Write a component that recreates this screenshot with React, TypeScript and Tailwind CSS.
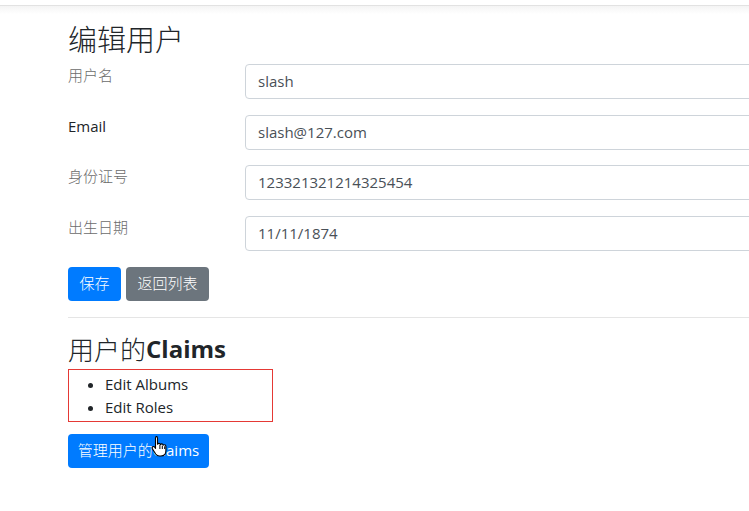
import React from "react";

const latin = "font-['Open_Sans','Noto_Sans_CJK_SC',sans-serif]";

function Field({ label, value, cjk }: { label: string; value: string; cjk?: boolean }) {
  return (
    <div className="flex items-start h-[35px]">
      <div
        className={`w-[177px] shrink-0 text-[15px] leading-[22px] ${
          cjk ? "text-[#6b6b6b] font-light font-['Noto_Sans_CJK_SC',sans-serif]" : "text-[#212529]"
        }`}
      >
        {label}
      </div>
      <div className="w-[600px] shrink-0 h-[35px] border border-[#ced4da] rounded-[4px] pl-[12px] flex items-center text-[15px] text-[#495057]">
        {value}
      </div>
    </div>
  );
}

function HandCursor() {
  return (
    <svg
      className="absolute left-[151px] top-[435px]"
      width="17"
      height="22"
      viewBox="0 0 17 22"
      fill="none"
    >
      <path
        d="M5 1.5c.9 0 1.5.6 1.5 1.5v6.2c.3-.5.8-.8 1.4-.8.8 0 1.4.5 1.5 1.2.3-.4.8-.7 1.3-.7.8 0 1.4.5 1.5 1.3.3-.3.7-.5 1.2-.5.9 0 1.5.7 1.5 1.6v4.5c0 3-2 5.2-5 5.2H8.4c-1.6 0-2.8-.7-3.7-2L1.4 13.9c-.5-.8-.3-1.7.4-2.1.7-.4 1.5-.2 1.9.4l.8 1.2V3c0-.9.6-1.5 1.5-1.5z"
        fill="#fff"
        stroke="#000"
        strokeWidth="1.1"
        strokeLinejoin="round"
      />
      <path d="M8.9 10v4M11.3 10.6v3.4M13.7 11.3v2.7" stroke="#000" strokeWidth="1" />
    </svg>
  );
}

export default function App() {
  return (
    <div className={`relative w-[749px] h-[511px] overflow-hidden bg-white ${latin}`}>
      <div className="h-[5px] bg-white" />
      <div className="h-[1px] bg-[#e2e2e2]" />
      <div className="h-[8px] bg-gradient-to-b from-[#f4f4f4] to-white" />

      <div className="pl-[68px]">
        <h2 className="mt-[7px] h-[35px] text-[29px] leading-[35px] font-light text-[#212529] font-['Noto_Sans_CJK_SC',sans-serif]">
          编辑用户
        </h2>

        <div className="mt-[8px] flex flex-col gap-[15.5px]">
          <Field label="用户名" value="slash" cjk />
          <Field label="Email" value="slash@127.com" />
          <Field label="身份证号" value="123321321214325454" cjk />
          <Field label="出生日期" value="11/11/1874" cjk />
        </div>

        <div className="mt-[16px] flex gap-[5px]">
          <button className="h-[34px] px-[11.5px] rounded-[4px] bg-[#007bff] text-white text-[15px] font-['Noto_Sans_CJK_SC',sans-serif] font-light">
            保存
          </button>
          <button className="h-[34px] px-[11.5px] rounded-[4px] bg-[#6c757d] text-white text-[15px] font-['Noto_Sans_CJK_SC',sans-serif] font-light">
            返回列表
          </button>
        </div>

        <div className="mt-[16px] h-[1px] bg-[rgba(0,0,0,0.1)]" />

        <h3 className="mt-[15px] h-[31px] flex items-center text-[#212529]">
          <span className="text-[26px] leading-[31px] font-light font-['Noto_Sans_CJK_SC',sans-serif]">用户的</span>
          <span className="text-[24px] leading-[31px] font-bold">Claims</span>
        </h3>

        <div className="mt-[5px] w-[205px] h-[53px] border border-[#e53935] pt-[3px]">
          <ul className="list-disc pl-[36px] text-[15px] leading-[23px] text-[#212529]">
            <li>Edit Albums</li>
            <li>Edit Roles</li>
          </ul>
        </div>

        <div className="mt-[12px]">
          <button className="h-[34px] w-[141px] rounded-[4px] bg-[#007bff] text-white text-[15px]">
            <span className="font-['Noto_Sans_CJK_SC',sans-serif] font-light">管理用户的</span>Claims
          </button>
        </div>
      </div>

      <HandCursor />
    </div>
  );
}
